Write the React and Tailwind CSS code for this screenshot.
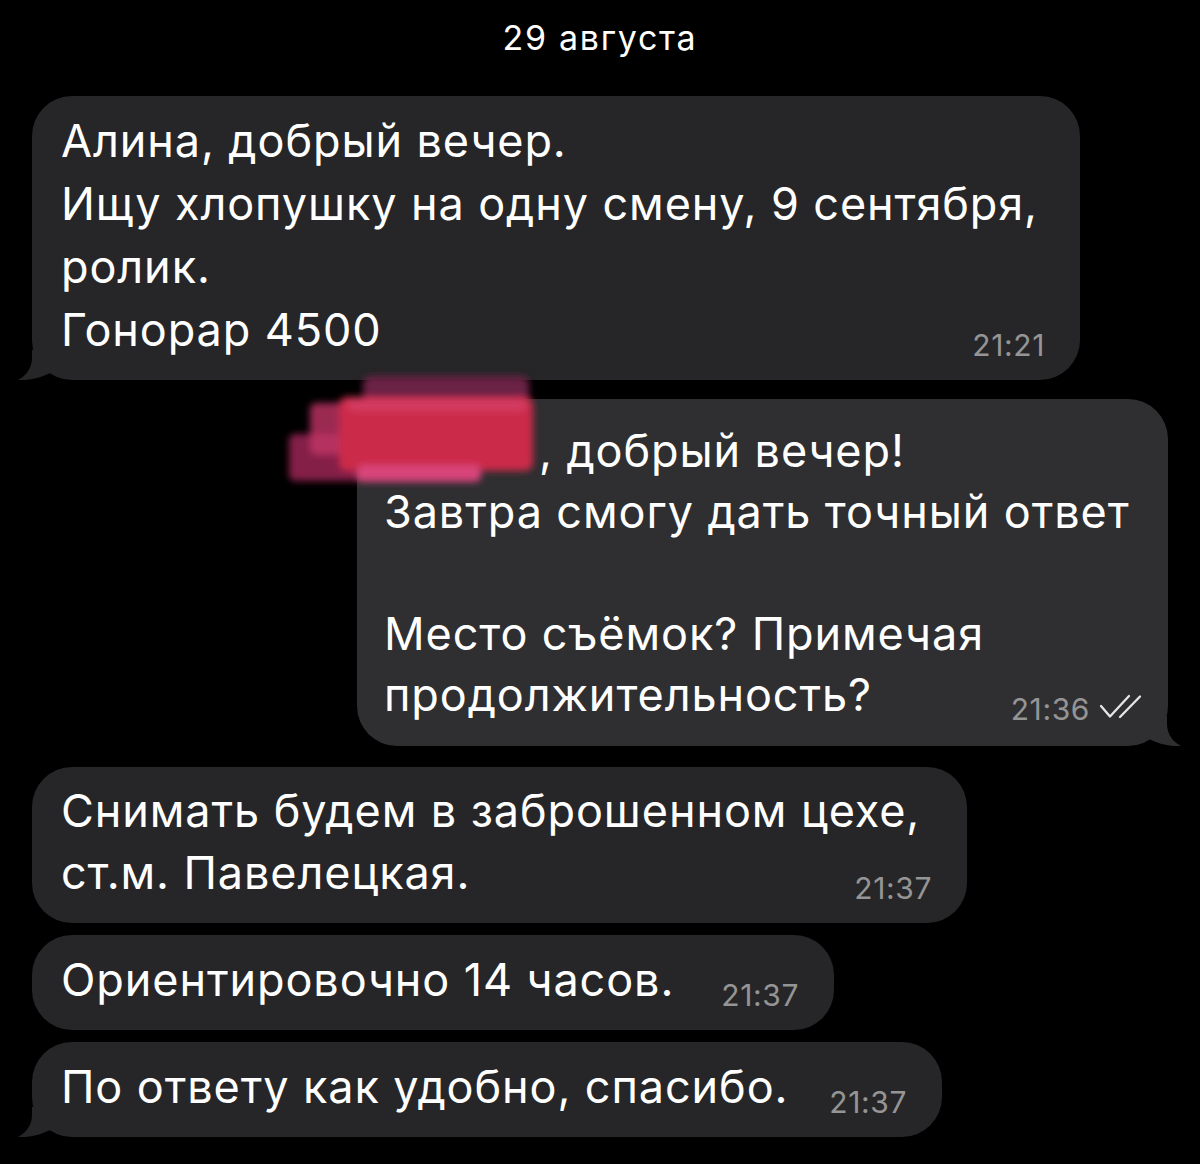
import React from "react";

const FONT = { fontFamily: "Inter, 'Noto Sans', sans-serif" };

// bubble tail, drawn for the incoming side; outgoing one is mirrored
const Tail = ({ color, right }) => (
  <svg
    width="44"
    height="30"
    viewBox="0 0 44 30"
    className={
      right
        ? "absolute bottom-0 -right-[13px] -scale-x-100"
        : "absolute bottom-0 -left-[14px]"
    }
  >
    <path d="M14 0 L14 8 C14 18 8 26 0 30 C10 30.6 22 28.5 35 21.5 L35 0 Z" fill={color} />
  </svg>
);

const Checks = () => (
  <svg width="44" height="26" viewBox="0 0 44 26" className="ml-[9px] mb-[5px]">
    <path
      d="M2 12 L11 22.5 L30 2 M21 23 L41 2.5"
      fill="none"
      stroke="#e6e6e6"
      strokeWidth="2.3"
      strokeLinecap="round"
      strokeLinejoin="round"
    />
  </svg>
);

const Time = ({ children }) => (
  <span className="shrink-0 text-[30px] leading-[32px] text-[#959595] tracking-[0.6px]">{children}</span>
);

const Redaction = () => (
  <svg
    width="300"
    height="150"
    viewBox="0 0 300 150"
    className="absolute -left-[85px] -top-[35px] pointer-events-none"
  >
    <defs>
      <filter id="smudge" x="-20%" y="-30%" width="140%" height="160%">
        <feGaussianBlur stdDeviation="3.6" />
      </filter>
    </defs>
    <g filter="url(#smudge)">
      <rect x="91" y="12" width="166" height="28" rx="8" fill="#6b2344" />
      <rect x="17" y="70" width="192" height="47" rx="6" fill="#a5285a" opacity="0.8" />
      <rect x="38" y="39" width="40" height="52" rx="6" fill="#c23566" opacity="0.8" />
      <rect x="67" y="33" width="194" height="74" rx="8" fill="#cc2c4a" />
      <rect x="85" y="101" width="124" height="17" rx="6" fill="#d8457a" />
      <rect x="75" y="35" width="180" height="12" rx="6" fill="#d9466f" opacity="0.6" />
    </g>
  </svg>
);

const Incoming = ({ width, lines, time, tail, tight }) => (
  <div className="pl-[32px]">
    <div
      className={
        "relative rounded-[40px] bg-[#262628] pl-[29px] pr-[35px] pt-[13px] pb-[19px] " +
        (tight ? "leading-[62px]" : "leading-[63px]")
      }
      style={{ width }}
    >
      {lines.slice(0, -1).map((l, i) => (
        <div key={i} className="whitespace-nowrap">{l}</div>
      ))}
      <div className="flex items-end justify-between">
        <span className="whitespace-nowrap">{lines[lines.length - 1]}</span>
        <Time>{time}</Time>
      </div>
      {tail && <Tail color="#262628" />}
    </div>
  </div>
);

export default function App() {
  return (
    <div className="min-h-screen w-[1200px] bg-black text-white" style={FONT}>
      {/* date */}
      <div className="pt-[18px] pb-[38px] text-center text-[34px] leading-[40px] tracking-[1.7px]">
        29 августа
      </div>

      <div className="text-[45px] tracking-[0.9px]">
        <Incoming
          width={1048}
          time="21:21"
          tail
          lines={[
            "Алина, добрый вечер.",
            "Ищу хлопушку на одну смену, 9 сентября,",
            "ролик.",
            "Гонорар 4500",
          ]}
        />

        {/* outgoing */}
        <div className="flex justify-end pr-[32px] mt-[19px]">
          <div className="relative w-[811px] rounded-[40px] bg-[#2f2f31] pl-[27px] pr-[25px] pt-[21px] pb-[21px] leading-[61px]">
            <div className="whitespace-nowrap pl-[155px]">, добрый вечер!</div>
            <div className="whitespace-nowrap">Завтра смогу дать точный ответ</div>
            <div className="h-[61px]" />
            <div className="whitespace-nowrap">Место съёмок? Примечая</div>
            <div className="flex items-end justify-between">
              <span className="whitespace-nowrap">продолжительность?</span>
              <span className="flex items-end">
                <Time>21:36</Time>
                <Checks />
              </span>
            </div>
            <Tail color="#2f2f31" right />
            <Redaction />
          </div>
        </div>

        <div className="mt-[21px] flex flex-col gap-[12px]">
          <Incoming
            width={935}
            time="21:37"
            tight
            lines={["Снимать будем в заброшенном цехе,", "ст.м. Павелецкая."]}
          />
          <Incoming width={802} time="21:37" lines={["Ориентировочно 14 часов."]} />
          <Incoming width={910} time="21:37" tail lines={["По ответу как удобно, спасибо."]} />
        </div>
      </div>
    </div>
  );
}
